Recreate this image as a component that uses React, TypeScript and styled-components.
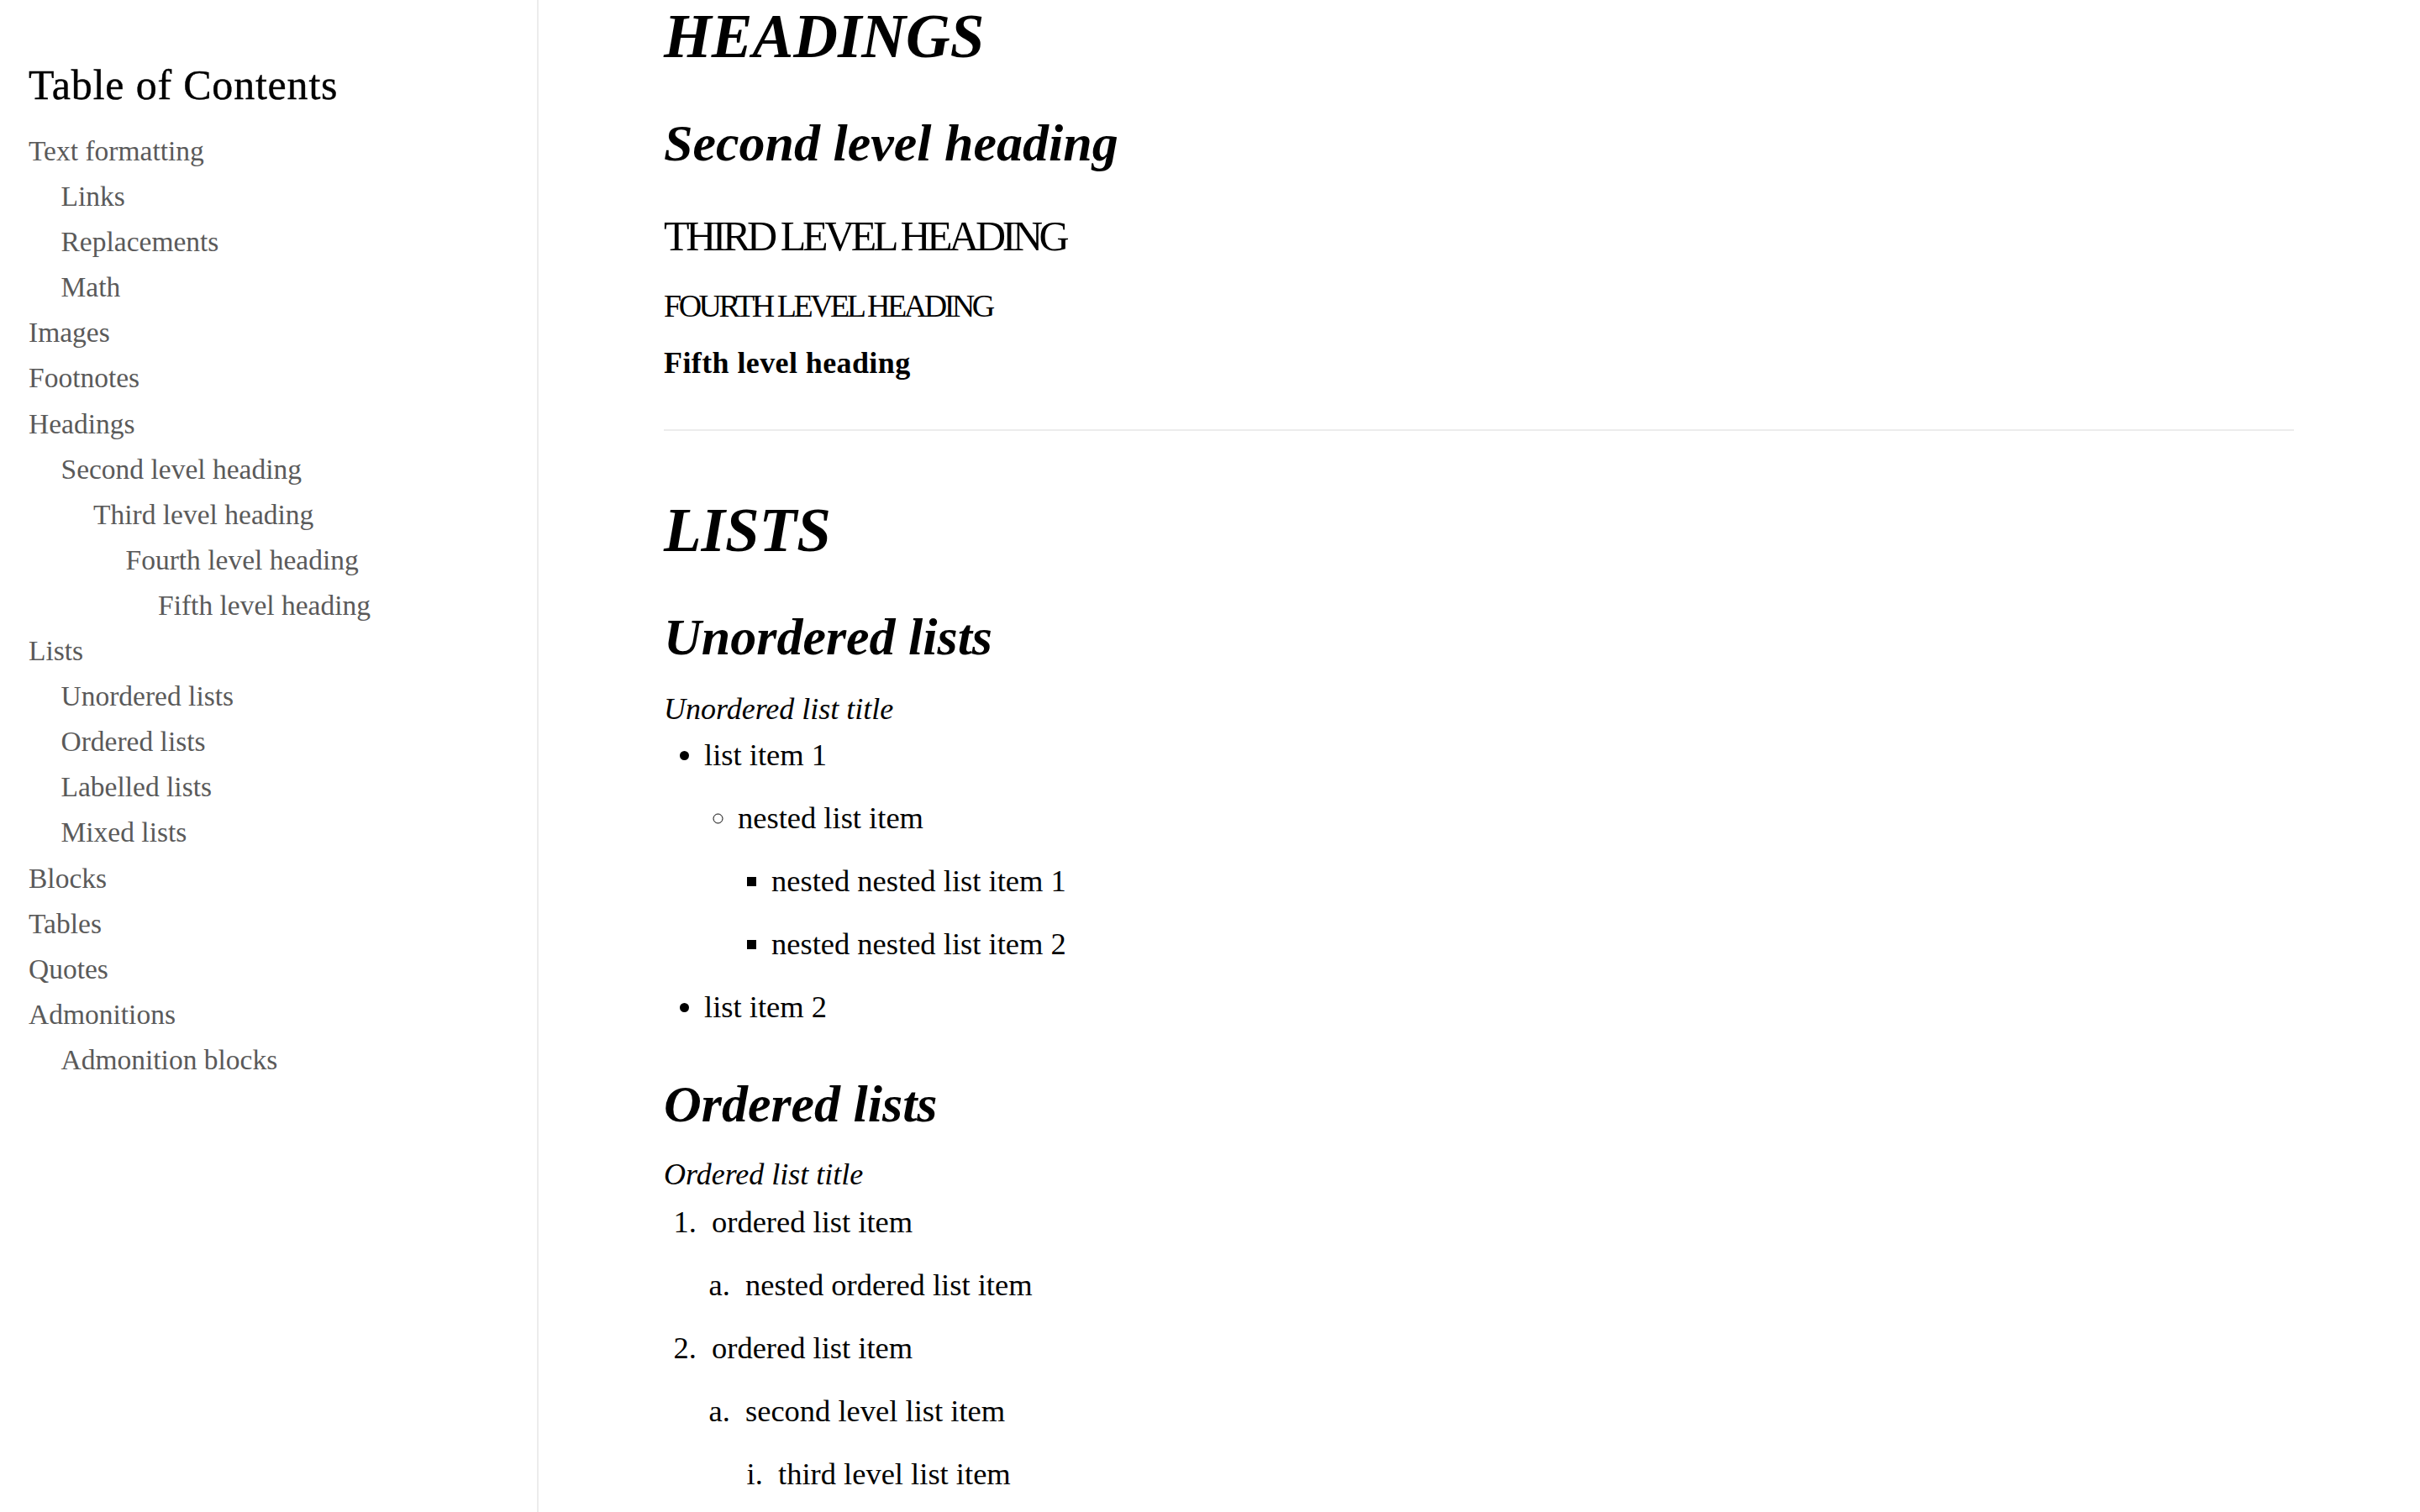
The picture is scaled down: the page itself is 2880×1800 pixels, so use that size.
import React from "react";
import styled, { createGlobalStyle } from "styled-components";

const Global = createGlobalStyle`
  html, body {
    margin: 0;
    padding: 0;
    background: #ffffff;
  }
  body {
    font-family: "Liberation Serif", "DejaVu Serif", serif;
    color: #000;
  }
  * { box-sizing: border-box; }
`;

const Page = styled.div`
  display: flex;
  width: 2880px;
  height: 1800px;
  overflow: hidden;
  background: #fff;
`;

const Sidebar = styled.nav`
  flex: 0 0 641px;
  height: 100%;
  border-right: 2px solid #ececec;
  padding: 71px 0 0 34px;
  background: #fff;
`;

const TocTitle = styled.h2`
  margin: 0;
  font-family: "Liberation Serif", serif;
  font-weight: 400;
  font-size: 50px;
  line-height: 60px;
  letter-spacing: 0.8px;
  color: #000;
  -webkit-text-stroke: 0.4px #000;
`;

const TocList = styled.ul<{ $nested?: boolean }>`
  list-style: none;
  margin: ${(p) => (p.$nested ? "0" : "22px 0 0 0")};
  padding: 0 0 0 ${(p) => (p.$nested ? "38.5px" : "0")};
`;

const TocItem = styled.li`
  margin: 0;
`;

const TocLink = styled.a`
  display: block;
  font-family: "Liberation Serif", serif;
  font-size: 33.5px;
  line-height: 54.1px;
  color: #5a5a5a;
  text-decoration: none;
  white-space: nowrap;
`;

const Main = styled.main`
  flex: 1 1 auto;
  height: 100%;
  padding: 0 150px 0 149px;
  overflow: hidden;
`;

const Article = styled.article`
  display: flex;
  flex-direction: column;
  align-items: stretch;
  width: 1940px;
`;

const H1 = styled.h1<{ $mt: number }>`
  margin: ${(p) => p.$mt}px 0 0 0;
  font-family: "Liberation Serif", serif;
  font-style: italic;
  font-weight: 700;
  font-size: 73px;
  line-height: 86px;
  text-transform: uppercase;
`;

const H2 = styled.h2<{ $mt: number }>`
  margin: ${(p) => p.$mt}px 0 0 0;
  font-family: "Liberation Serif", serif;
  font-style: italic;
  font-weight: 700;
  font-size: 62px;
  line-height: 74px;
`;

const H3 = styled.h3`
  margin: 44px 0 0 0;
  font-family: "Liberation Serif", serif;
  font-weight: 400;
  font-size: 50px;
  line-height: 60px;
  text-transform: uppercase;
  letter-spacing: -4.4px;
`;

const H4 = styled.h4`
  margin: 30px 0 0 0;
  font-family: "Liberation Serif", serif;
  font-weight: 400;
  font-size: 38px;
  line-height: 46px;
  text-transform: uppercase;
  letter-spacing: -3.5px;
`;

const H5 = styled.h5`
  margin: 23px 0 0 0;
  font-family: "Liberation Serif", serif;
  font-weight: 700;
  font-size: 36px;
  line-height: 44px;
  letter-spacing: 0.4px;
`;

const Rule = styled.hr`
  margin: 57px 0 0 0;
  border: 0;
  height: 2px;
  background: #ececec;
  width: 100%;
`;

const ListTitle = styled.div<{ $mt: number }>`
  margin-top: ${(p) => p.$mt}px;
  font-family: "Liberation Serif", serif;
  font-style: italic;
  font-size: 36px;
  line-height: 54px;
`;

type Marker = "disc" | "circle" | "square" | "decimal" | "lower-alpha" | "lower-roman";

const isOrdered = (m: Marker) => m === "decimal" || m === "lower-alpha" || m === "lower-roman";

const List = styled.ul<{ $marker: Marker; $pad: number; $mt: number }>`
  margin: ${(p) => p.$mt}px 0 0 0;
  padding: 0 0 0 ${(p) => p.$pad}px;
  list-style-type: ${(p) => p.$marker};
  font-family: "Liberation Serif", serif;
  font-size: 36.5px;
  line-height: 54px;

  & > li + li {
    margin-top: 21px;
  }

  ${(p) =>
    isOrdered(p.$marker)
      ? `& > li::marker { content: counter(list-item, ${p.$marker}) ".\\2002"; }`
      : ""}
`;

const Item = styled.li``;

const ItemText = styled.p`
  margin: 0;
`;

type TocEntry = { label: string; children?: TocEntry[] };

const toc: TocEntry[] = [
  {
    label: "Text formatting",
    children: [{ label: "Links" }, { label: "Replacements" }, { label: "Math" }],
  },
  { label: "Images" },
  { label: "Footnotes" },
  {
    label: "Headings",
    children: [
      {
        label: "Second level heading",
        children: [
          {
            label: "Third level heading",
            children: [
              {
                label: "Fourth level heading",
                children: [{ label: "Fifth level heading" }],
              },
            ],
          },
        ],
      },
    ],
  },
  {
    label: "Lists",
    children: [
      { label: "Unordered lists" },
      { label: "Ordered lists" },
      { label: "Labelled lists" },
      { label: "Mixed lists" },
    ],
  },
  { label: "Blocks" },
  { label: "Tables" },
  { label: "Quotes" },
  { label: "Admonitions", children: [{ label: "Admonition blocks" }] },
];

const TocTree: React.FC<{ entries: TocEntry[]; nested?: boolean }> = ({ entries, nested }) => (
  <TocList $nested={nested}>
    {entries.map((e) => (
      <TocItem key={e.label}>
        <TocLink href={"#" + e.label.toLowerCase().replace(/\s+/g, "-")}>{e.label}</TocLink>
        {e.children && <TocTree entries={e.children} nested />}
      </TocItem>
    ))}
  </TocList>
);

export default function App() {
  return (
    <>
      <Global />
      <Page>
        <Sidebar>
          <TocTitle>Table of Contents</TocTitle>
          <TocTree entries={toc} />
        </Sidebar>
        <Main>
          <Article>
            <H1 $mt={1}>Headings</H1>
            <H2 $mt={46}>Second level heading</H2>
            <H3>Third level heading</H3>
            <H4>Fourth level heading</H4>
            <H5>Fifth level heading</H5>
            <Rule />
            <H1 $mt={76}>Lists</H1>
            <H2 $mt={46}>Unordered lists</H2>
            <ListTitle $mt={22}>Unordered list title</ListTitle>
            <List $marker="disc" $pad={48} $mt={1}>
              <Item>
                <ItemText>list item 1</ItemText>
                <List $marker="circle" $pad={40} $mt={21}>
                  <Item>
                    <ItemText>nested list item</ItemText>
                    <List $marker="square" $pad={40} $mt={21}>
                      <Item>
                        <ItemText>nested nested list item 1</ItemText>
                      </Item>
                      <Item>
                        <ItemText>nested nested list item 2</ItemText>
                      </Item>
                    </List>
                  </Item>
                </List>
              </Item>
              <Item>
                <ItemText>list item 2</ItemText>
              </Item>
            </List>
            <H2 $mt={51}>Ordered lists</H2>
            <ListTitle $mt={20}>Ordered list title</ListTitle>
            <List as="ol" $marker="decimal" $pad={57} $mt={3}>
              <Item>
                <ItemText>ordered list item</ItemText>
                <List as="ol" $marker="lower-alpha" $pad={40} $mt={21}>
                  <Item>
                    <ItemText>nested ordered list item</ItemText>
                  </Item>
                </List>
              </Item>
              <Item>
                <ItemText>ordered list item</ItemText>
                <List as="ol" $marker="lower-alpha" $pad={40} $mt={21}>
                  <Item>
                    <ItemText>second level list item</ItemText>
                    <List as="ol" $marker="lower-roman" $pad={39} $mt={21}>
                      <Item>
                        <ItemText>third level list item</ItemText>
                      </Item>
                    </List>
                  </Item>
                </List>
              </Item>
            </List>
          </Article>
        </Main>
      </Page>
    </>
  );
}
